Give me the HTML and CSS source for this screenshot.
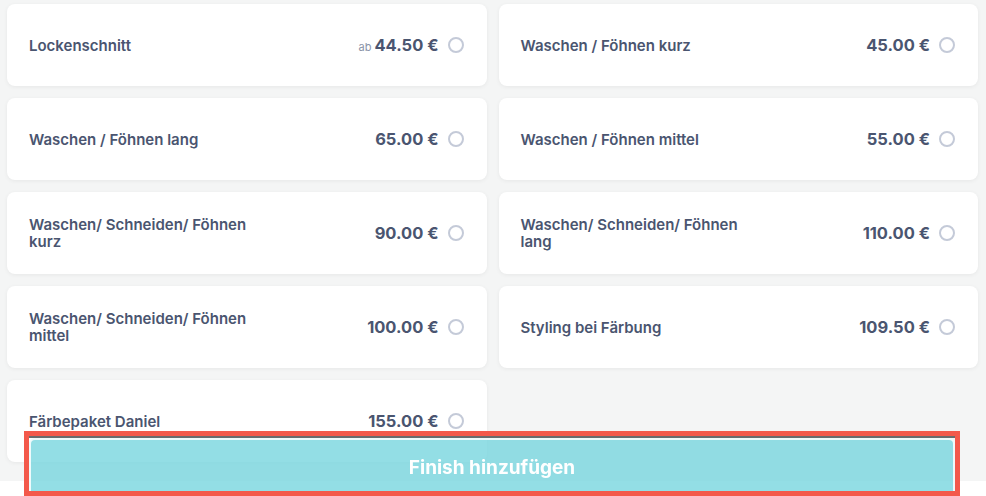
FILE: index.html
```html
<!DOCTYPE html>
<html lang="de">
<head>
  <meta charset="UTF-8">
  <title>Finish auswählen</title>
  <link rel="stylesheet" href="styles.css">
</head>
<body>

  <div class="page">
    <div class="services">
      <label class="service">
        <span class="name">Lockenschnitt</span>
        <span class="price"><small>ab</small>44.50 €</span>
        <span class="radio"></span>
      </label>
      <label class="service">
        <span class="name">Waschen / Föhnen kurz</span>
        <span class="price">45.00 €</span>
        <span class="radio"></span>
      </label>
      <label class="service">
        <span class="name">Waschen / Föhnen lang</span>
        <span class="price">65.00 €</span>
        <span class="radio"></span>
      </label>
      <label class="service">
        <span class="name">Waschen / Föhnen mittel</span>
        <span class="price">55.00 €</span>
        <span class="radio"></span>
      </label>
      <label class="service">
        <span class="name">Waschen/ Schneiden/ Föhnen kurz</span>
        <span class="price">90.00 €</span>
        <span class="radio"></span>
      </label>
      <label class="service">
        <span class="name">Waschen/ Schneiden/ Föhnen lang</span>
        <span class="price">110.00 €</span>
        <span class="radio"></span>
      </label>
      <label class="service">
        <span class="name">Waschen/ Schneiden/ Föhnen mittel</span>
        <span class="price">100.00 €</span>
        <span class="radio"></span>
      </label>
      <label class="service">
        <span class="name">Styling bei Färbung</span>
        <span class="price">109.50 €</span>
        <span class="radio"></span>
      </label>
      <label class="service">
        <span class="name">Färbepaket Daniel</span>
        <span class="price">155.00 €</span>
        <span class="radio"></span>
      </label>
    </div>
  </div>

  <!-- sticky action, marked with the red highlight -->
  <div class="highlight">
    <button class="finish">Finish hinzufügen</button>
  </div>

</body>
</html>
```

FILE: styles.css
```css
body {
  margin: 0;
  background: #fff;
  font-family: Inter, "Open Sans", sans-serif;
  color: #4a5570;
}
.page {
  background: #f4f5f5;
  padding: 4px 8px 19px 7px;
}
.services {
  display: grid;
  grid-template-columns: 1fr 1fr;
  gap: 12px;
}
.service {
  height: 82px;
  box-sizing: border-box;
  background: #fff;
  border-radius: 8px;
  box-shadow: 0 1px 4px rgba(0, 0, 0, 0.06);
  display: flex;
  align-items: center;
  padding: 0 23px 0 22px;
}
.name {
  flex: 1;
  max-width: 232px;
  font-size: 15px;
  font-weight: 600;
  line-height: 17px;
  margin-right: auto;
}
.price {
  margin-left: auto;
  font-size: 16.5px;
  font-weight: 700;
}
.price small {
  font-size: 11px;
  font-weight: 400;
  color: #8a93a8;
  margin-right: 3px;
}
.radio {
  width: 12px;
  height: 12px;
  border: 2px solid #c4cad8;
  border-radius: 50%;
  margin-left: 9px;
}
.highlight {
  position: fixed;
  left: 24px;
  top: 431px;
  width: 936px;
  height: 65px;
  box-sizing: border-box;
  border: 5px solid #f3594b;
  padding-top: 2px;
  box-shadow: inset 0 2px 0 #686c6e;
}
.finish {
  display: block;
  width: 100%;
  height: 100%;
  border: 2px solid rgba(255, 255, 255, 0.85);
  border-bottom: 0;
  border-radius: 6px 6px 0 0;
  background: rgba(120, 214, 222, 0.8);
  color: #fff;
  font-family: Inter, "Open Sans", sans-serif;
  font-size: 19px;
  font-weight: 700;
  padding-top: 5px;
}
```
